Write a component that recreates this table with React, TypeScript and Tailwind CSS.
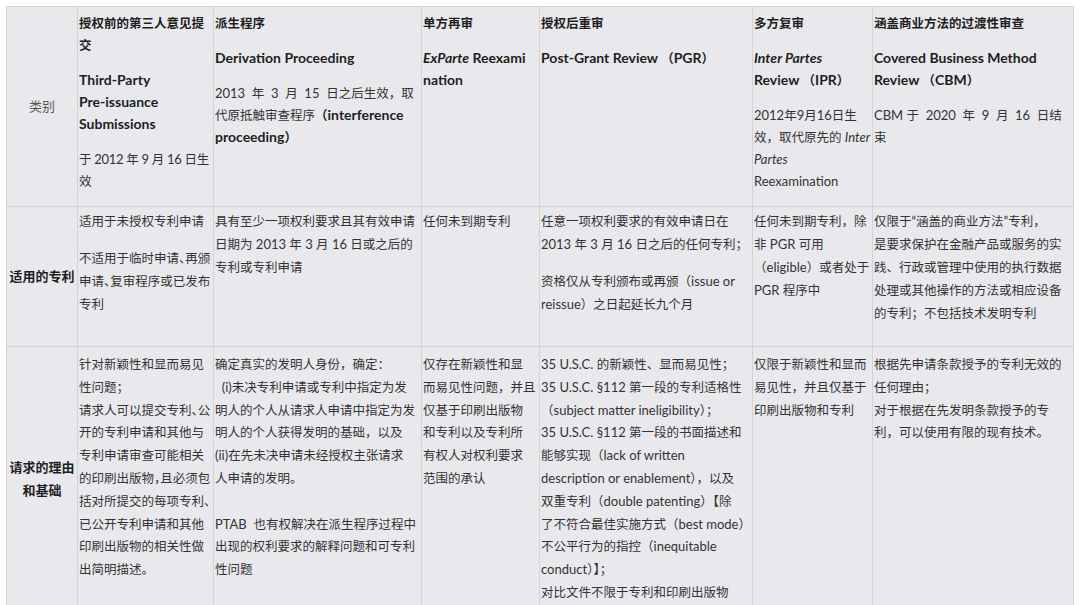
import type { ReactNode } from 'react';

// latin runs use their own size (--lat), a little larger than the CJK text
const lat = (s: string): ReactNode[] =>
  s.split(/([\u0000-\u024f]+)/).map((part, i) =>
    /[\u0000-\u024f]/.test(part) ? (
      <span key={i} className="text-[length:var(--lat)] leading-none">
        {part}
      </span>
    ) : (
      part
    )
  );

const T = ({ children }: { children: string }) => <>{lat(children)}</>;

const Ln = ({
  children,
  tight = false,
  half = false,
}: {
  children: ReactNode;
  tight?: boolean;
  half?: boolean;
}) => (
  <div
    className={`whitespace-pre ${tight ? 'tracking-[-0.3px]' : ''} ${
      half ? "[font-feature-settings:'halt']" : ''
    }`}
  >
    {typeof children === 'string' ? lat(children) : children}
  </div>
);

const P = ({ children, bold = false }: { children: ReactNode; bold?: boolean }) => (
  <div className={`mt-[var(--gap)] first:mt-0 ${bold ? 'font-bold text-[#1e1e1e] [--lat:14px]' : ''}`}>
    {children}
  </div>
);

const Cell = ({ children, pad }: { children?: ReactNode; pad: string }) => (
  <div className={`bg-[#e9e9ed] overflow-hidden pl-[1px] pr-[1px] ${pad}`}>{children}</div>
);

const Label = ({ children, bold = false }: { children: ReactNode; bold?: boolean }) => (
  <div
    className={`bg-[#e9e9ed] flex items-center justify-center text-center text-[13px] leading-[23px] ${
      bold ? 'font-bold text-[#1e1e1e]' : 'text-[#555]'
    }`}
  >
    <div>{children}</div>
  </div>
);

export default function App() {
  const r1 = 'pt-[6px] leading-[22px] [--gap:13px]';
  const r2 = 'pt-[3px] leading-[23px] [--gap:14px]';
  const r3 = 'pt-[7px] leading-[22.8px] [--gap:13px]';

  return (
    <div className="min-h-screen bg-white pt-[6px] pl-[6px] font-['Lato','Noto_Sans_CJK_SC',sans-serif] text-[12.5px] text-[#333] [--lat:13px]">
      <div className="grid w-max grid-cols-[70px_135px_207px_117px_212px_119px_200px] grid-rows-[199px_139px_263px] gap-px border border-[#d3d3d7] bg-[#d3d3d7]">
        {/* row 1: 类别 */}
        <Label>类别</Label>
        <Cell pad={r1}>
          <P bold>
            <Ln>授权前的第三人意见提</Ln>
            <Ln>交</Ln>
          </P>
          <P bold>
            <Ln>Third-Party</Ln>
            <Ln>Pre-issuance</Ln>
            <Ln>Submissions</Ln>
          </P>
          <P>
            <Ln tight>于 2012 年 9 月 16 日生</Ln>
            <Ln>效</Ln>
          </P>
        </Cell>
        <Cell pad={r1}>
          <P bold>
            <Ln>派生程序</Ln>
          </P>
          <P bold>
            <Ln>Derivation Proceeding</Ln>
          </P>
          <P>
            <Ln>2013  年  3  月  15  日之后生效，取</Ln>
            <Ln>
              <T>代原抵触审查程序</T>
              <b className="text-[#1e1e1e] [--lat:14px]">
                <T>（interference</T>
              </b>
            </Ln>
            <Ln>
              <b className="text-[#1e1e1e] [--lat:14px]">
                <T>proceeding）</T>
              </b>
            </Ln>
          </P>
        </Cell>
        <Cell pad={r1}>
          <P bold>
            <Ln>单方再审</Ln>
          </P>
          <P bold>
            <Ln>
              <i>
                <T>ExParte</T>
              </i>
              <T> Reexami</T>
            </Ln>
            <Ln>nation</Ln>
          </P>
        </Cell>
        <Cell pad={r1}>
          <P bold>
            <Ln>授权后重审</Ln>
          </P>
          <P bold>
            <Ln>Post-Grant Review （PGR）</Ln>
          </P>
        </Cell>
        <Cell pad={r1}>
          <P bold>
            <Ln>多方复审</Ln>
          </P>
          <P bold>
            <Ln>
              <i>
                <T>Inter Partes</T>
              </i>
            </Ln>
            <Ln>Review （IPR）</Ln>
          </P>
          <P>
            <Ln>2012年9月16日生</Ln>
            <Ln>
              <T>效，取代原先的 </T>
              <i>
                <T>Inter</T>
              </i>
            </Ln>
            <Ln>
              <i>
                <T>Partes</T>
              </i>
            </Ln>
            <Ln>Reexamination</Ln>
          </P>
        </Cell>
        <Cell pad={r1}>
          <P bold>
            <Ln>涵盖商业方法的过渡性审查</Ln>
          </P>
          <P bold>
            <Ln>Covered Business Method</Ln>
            <Ln>Review （CBM）</Ln>
          </P>
          <P>
            <Ln>CBM 于  2020  年  9  月  16  日结</Ln>
            <Ln>束</Ln>
          </P>
        </Cell>

        {/* row 2: 适用的专利 */}
        <Label bold>适用的专利</Label>
        <Cell pad={r2}>
          <P>
            <Ln>适用于未授权专利申请</Ln>
          </P>
          <P>
            <Ln half>不适用于临时申请、再颁</Ln>
            <Ln half>申请、复审程序或已发布</Ln>
            <Ln>专利</Ln>
          </P>
        </Cell>
        <Cell pad={r2}>
          <P>
            <Ln>具有至少一项权利要求且其有效申请</Ln>
            <Ln>日期为 2013 年 3 月 16 日或之后的</Ln>
            <Ln>专利或专利申请</Ln>
          </P>
        </Cell>
        <Cell pad={r2}>
          <P>
            <Ln>任何未到期专利</Ln>
          </P>
        </Cell>
        <Cell pad={r2}>
          <P>
            <Ln>任意一项权利要求的有效申请日在</Ln>
            <Ln>2013 年 3 月 16 日之后的任何专利；</Ln>
          </P>
          <P>
            <Ln>资格仅从专利颁布或再颁（issue or</Ln>
            <Ln>reissue）之日起延长九个月</Ln>
          </P>
        </Cell>
        <Cell pad={r2}>
          <P>
            <Ln>任何未到期专利，除</Ln>
            <Ln>非 PGR 可用</Ln>
            <Ln>（eligible）或者处于</Ln>
            <Ln>PGR 程序中</Ln>
          </P>
        </Cell>
        <Cell pad={r2}>
          <P>
            <Ln>仅限于“涵盖的商业方法”专利，</Ln>
            <Ln>是要求保护在金融产品或服务的实</Ln>
            <Ln>践、行政或管理中使用的执行数据</Ln>
            <Ln>处理或其他操作的方法或相应设备</Ln>
            <Ln>的专利；不包括技术发明专利</Ln>
          </P>
        </Cell>

        {/* row 3: 请求的理由和基础 */}
        <Label bold>
          请求的理由
          <br />
          和基础
        </Label>
        <Cell pad={r3}>
          <P>
            <Ln>针对新颖性和显而易见</Ln>
            <Ln>性问题；</Ln>
            <Ln half>请求人可以提交专利、公</Ln>
            <Ln>开的专利申请和其他与</Ln>
            <Ln>专利申请审查可能相关</Ln>
            <Ln half>的印刷出版物，且必须包</Ln>
            <Ln half>括对所提交的每项专利、</Ln>
            <Ln>已公开专利申请和其他</Ln>
            <Ln>印刷出版物的相关性做</Ln>
            <Ln>出简明描述。</Ln>
          </P>
        </Cell>
        <Cell pad={r3}>
          <P>
            <Ln>确定真实的发明人身份，确定：</Ln>
            <Ln>  (i)未决专利申请或专利中指定为发</Ln>
            <Ln>明人的个人从请求人申请中指定为发</Ln>
            <Ln>明人的个人获得发明的基础，以及</Ln>
            <Ln>(ii)在先未决申请未经授权主张请求</Ln>
            <Ln>人申请的发明。</Ln>
            <Ln> </Ln>
            <Ln>PTAB  也有权解决在派生程序过程中</Ln>
            <Ln>出现的权利要求的解释问题和可专利</Ln>
            <Ln>性问题</Ln>
          </P>
        </Cell>
        <Cell pad={r3}>
          <P>
            <Ln>仅存在新颖性和显</Ln>
            <Ln>而易见性问题，并且</Ln>
            <Ln>仅基于印刷出版物</Ln>
            <Ln>和专利以及专利所</Ln>
            <Ln>有权人对权利要求</Ln>
            <Ln>范围的承认</Ln>
          </P>
        </Cell>
        <Cell pad={r3}>
          <P>
            <Ln>35 U.S.C. 的新颖性、显而易见性；</Ln>
            <Ln>35 U.S.C. §112 第一段的专利适格性</Ln>
            <Ln>（subject matter ineligibility）；</Ln>
            <Ln>35 U.S.C. §112 第一段的书面描述和</Ln>
            <Ln>能够实现（lack of written</Ln>
            <Ln>description or enablement），以及</Ln>
            <Ln>双重专利（double patenting）【除</Ln>
            <Ln>了不符合最佳实施方式（best mode）</Ln>
            <Ln>不公平行为的指控（inequitable</Ln>
            <Ln>conduct）】；</Ln>
            <Ln>对比文件不限于专利和印刷出版物</Ln>
          </P>
        </Cell>
        <Cell pad={r3}>
          <P>
            <Ln>仅限于新颖性和显而</Ln>
            <Ln>易见性，并且仅基于</Ln>
            <Ln>印刷出版物和专利</Ln>
          </P>
        </Cell>
        <Cell pad={r3}>
          <P>
            <Ln>根据先申请条款授予的专利无效的</Ln>
            <Ln>任何理由；</Ln>
            <Ln>对于根据在先发明条款授予的专</Ln>
            <Ln>利，可以使用有限的现有技术。</Ln>
          </P>
        </Cell>
      </div>
    </div>
  );
}
